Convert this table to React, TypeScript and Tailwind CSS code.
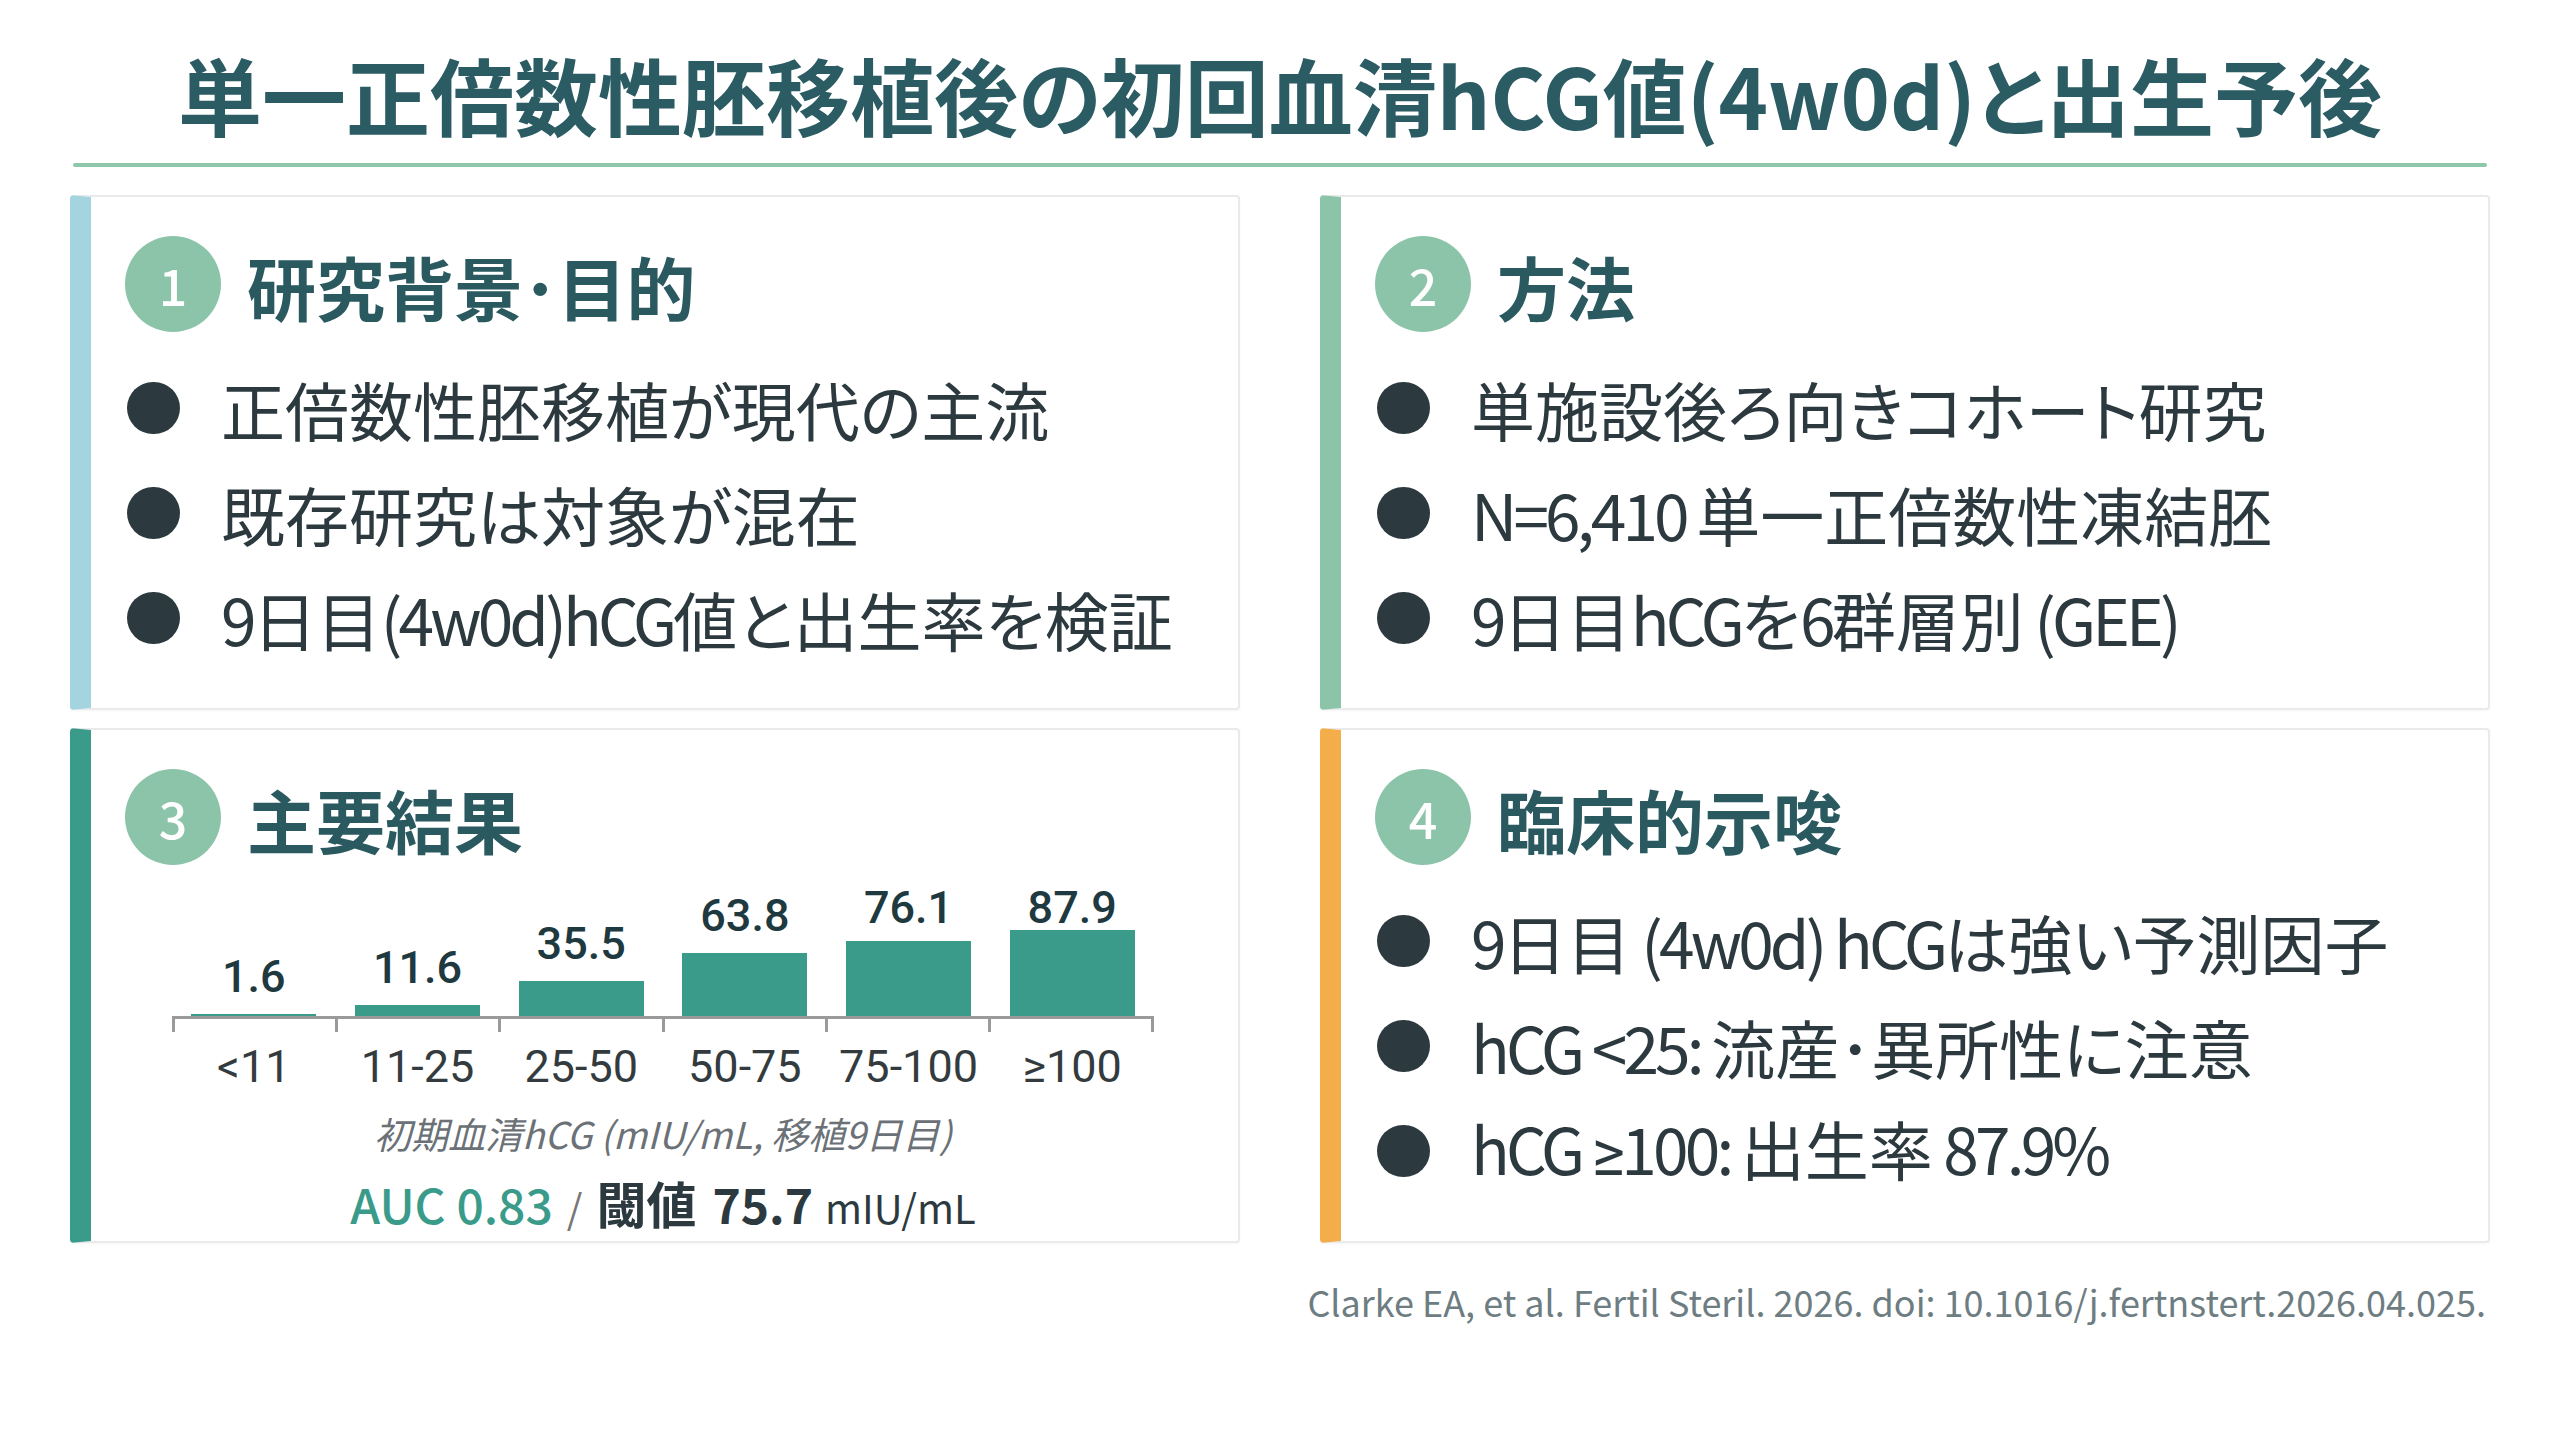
import React from "react";

const FONT = { fontFamily: '"Noto Sans CJK JP", "Noto Sans", sans-serif' };
const ROBOTO = { fontFamily: 'Roboto, "Noto Sans CJK JP", sans-serif' };

function Rich({ text }: { text: string }) {
  const parts = text.split(/([\x20-\x7E≥]+)/);
  return (
    <>
      {parts.map((p, i) =>
        i % 2 === 1 ? (
          <span key={i} className="tracking-[-0.06em]">
            {p.split("≥").map((q, j) => (
              <React.Fragment key={j}>
                {j > 0 && <span style={ROBOTO}>≥</span>}
                {q}
              </React.Fragment>
            ))}
          </span>
        ) : (
          <React.Fragment key={i}>{p}</React.Fragment>
        )
      )}
    </>
  );
}

function Badge({ n }: { n: string }) {
  return (
    <div className="flex h-[96px] w-[96px] shrink-0 items-center justify-center rounded-full bg-[#8cc4a9] text-[50px] font-medium leading-none text-white">
      {n}
    </div>
  );
}

function Header({ n, title }: { n: string; title: string }) {
  return (
    <div className="flex items-center gap-[26px]">
      <Badge n={n} />
      <div className="pt-[4px] text-[69px] font-bold leading-none text-[#2a5a60]">{title}</div>
    </div>
  );
}

function Bullets({ items }: { items: string[] }) {
  return (
    <div className="mt-[23px] flex flex-col">
      {items.map((t, i) => (
        <div key={i} className="flex h-[105px] items-center">
          <div className="ml-[2px] h-[52px] w-[53px] shrink-0 rounded-full bg-[#2c3a40]" />
          <div className="ml-[41px] whitespace-nowrap text-[64px] leading-none text-[#2c3a40]">
            <Rich text={t} />
          </div>
        </div>
      ))}
    </div>
  );
}

function Card({ bar, children }: { bar: string; children: React.ReactNode }) {
  return (
    <div className={`h-[515px] rounded-[4px] border-2 border-l-[21px] border-[#e8eaeb] bg-white pl-[34px] pt-[39px] shadow-[0_1px_3px_rgba(0,0,0,0.04)] ${bar}`}>
      {children}
    </div>
  );
}

const data = [
  { label: "<11", v: 1.6 },
  { label: "11-25", v: 11.6 },
  { label: "25-50", v: 35.5 },
  { label: "50-75", v: 63.8 },
  { label: "75-100", v: 76.1 },
  { label: "≥100", v: 87.9 },
];

function Chart() {
  return (
    <div className="ml-[47px] w-[982px]" style={ROBOTO}>
      <div className="mt-[11px] flex h-[140px] items-end">
        {data.map((d) => {
          const h = d.v * 0.98;
          const gap = Math.min(24, 95 - h);
          return (
            <div key={d.label} className="flex flex-1 flex-col items-center justify-end">
              <div
                className="text-[45px] font-medium leading-none text-[#1e3940]"
                style={{ marginBottom: `${gap - 9}px` }}
              >
                {d.v.toFixed(1)}
              </div>
              <div className="w-[125px] bg-[#3a9b8b]" style={{ height: `${h}px` }} />
            </div>
          );
        })}
      </div>
      <div className="h-[3px] bg-[#9a9a9a]" />
      <div className="flex h-[13px]">
        {data.map((d, i) => (
          <div
            key={d.label}
            className={`flex-1 border-l-[3px] border-[#9a9a9a] ${i === data.length - 1 ? "border-r-[3px]" : ""}`}
          />
        ))}
      </div>
      <div className="mt-[12px] flex">
        {data.map((d) => (
          <div key={d.label} className="flex-1 text-center text-[45px] leading-none text-[#333b3e]">
            {d.label}
          </div>
        ))}
      </div>
      <div className="mt-[26px] text-center text-[37px] italic leading-none text-[#6b7176]" style={FONT}>
        初期血清hCG (mIU/mL, 移植9日目)
      </div>
      <div className="mt-[25px] flex items-baseline justify-center whitespace-nowrap leading-none" style={FONT}>
        <span className="text-[48px] font-medium text-[#3a9b8b]">AUC 0.83</span>
        <span className="mx-[14px] text-[40px] text-[#777]">/</span>
        <span className="text-[50px] font-bold text-[#2c3a40]">閾値</span>
        <span className="ml-[16px] text-[48px] font-bold text-[#2c3a40]">75.7</span>
        <span className="ml-[12px] text-[40px] text-[#2c3a40]">mIU/mL</span>
      </div>
    </div>
  );
}

export default function App() {
  return (
    <div
      className="h-[1440px] w-[2560px] overflow-hidden bg-white px-[70px] [font-feature-settings:'palt']"
      style={FONT}
    >
      <div className="pt-[52px] text-center text-[84px] font-bold leading-none text-[#2b5b63]">
        単一正倍数性胚移植後の初回血清hCG値(4w0d)と出生予後
      </div>
      <div className="mx-[3px] mt-[27px] h-[4px] rounded-full bg-[#8fc7aa]" />
      <div className="mt-[28px] grid grid-cols-2 gap-x-[80px] gap-y-[18px]">
        <Card bar="border-l-[#a5d4e1]">
          <Header n="1" title="研究背景･目的" />
          <Bullets items={["正倍数性胚移植が現代の主流", "既存研究は対象が混在", "9日目(4w0d)hCG値と出生率を検証"]} />
        </Card>
        <Card bar="border-l-[#8cc4a9]">
          <Header n="2" title="方法" />
          <Bullets items={["単施設後ろ向きコホート研究", "N=6,410 単一正倍数性凍結胚", "9日目hCGを6群層別 (GEE)"]} />
        </Card>
        <Card bar="border-l-[#3a9b8b]">
          <Header n="3" title="主要結果" />
          <Chart />
        </Card>
        <Card bar="border-l-[#f3ad4b]">
          <Header n="4" title="臨床的示唆" />
          <Bullets items={["9日目 (4w0d) hCGは強い予測因子", "hCG <25: 流産･異所性に注意", "hCG ≥100: 出生率 87.9%"]} />
        </Card>
      </div>
      <div className="mt-[40px] pr-[4px] text-right text-[36px] leading-none text-[#6d7d82]">
        Clarke EA, et al. Fertil Steril. 2026. doi: 10.1016/j.fertnstert.2026.04.025.
      </div>
    </div>
  );
}
